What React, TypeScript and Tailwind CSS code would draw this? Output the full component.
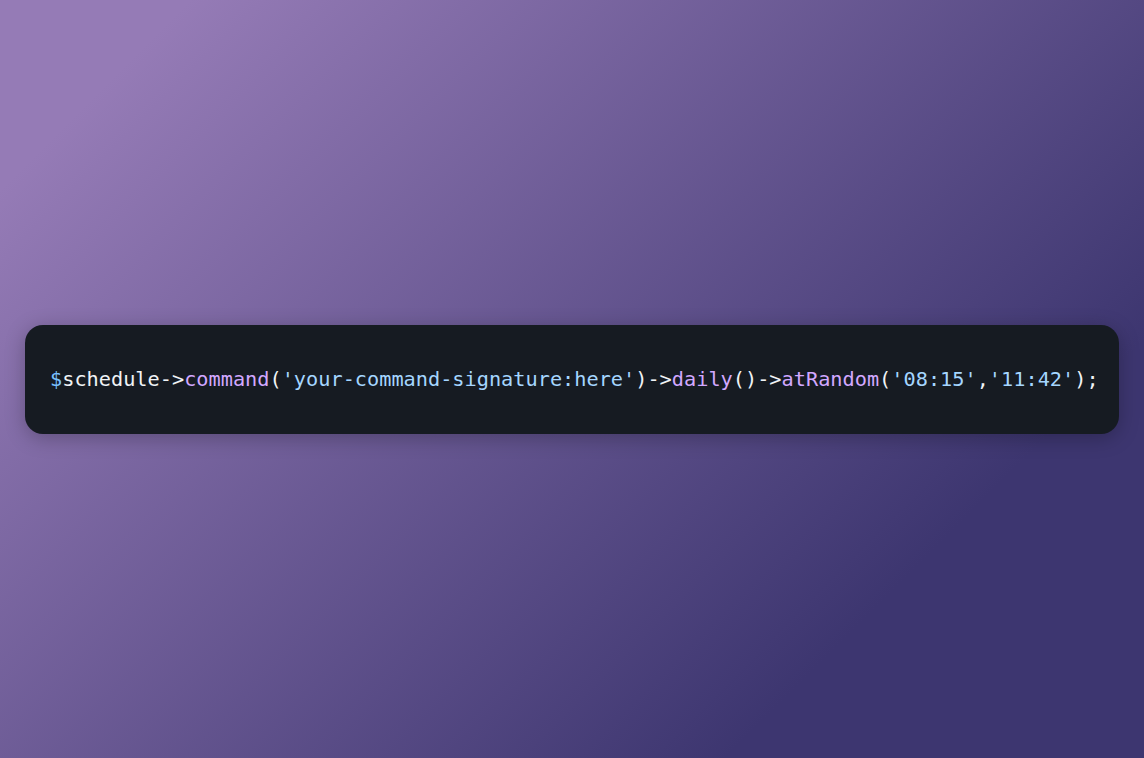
export default function App() {
  return (
    <div className="min-h-screen w-full flex items-center px-[25px] bg-[linear-gradient(135deg,#957bb6_10%,#3d3670_78%)]">
      <div className="w-full rounded-[18px] bg-[#161b22] px-[25px] py-[42px] shadow-[0_4px_20px_rgba(0,0,0,0.25)]">
        <pre className="text-[20.25px] leading-[25px] text-[#f0f3f6] font-['DejaVu_Sans_Mono','Liberation_Mono',monospace] whitespace-pre">
          <span className="text-[#79c0ff]">$</span>
          <span>schedule-&gt;</span>
          <span className="text-[#d2a8ff]">command</span>
          <span>(</span>
          <span className="text-[#a5d6ff]">'your-command-signature:here'</span>
          <span>)-&gt;</span>
          <span className="text-[#d2a8ff]">daily</span>
          <span>()-&gt;</span>
          <span className="text-[#d2a8ff]">atRandom</span>
          <span>(</span>
          <span className="text-[#a5d6ff]">'08:15'</span>
          <span>,</span>
          <span className="text-[#a5d6ff]">'11:42'</span>
          <span>);</span>
        </pre>
      </div>
    </div>
  );
}
